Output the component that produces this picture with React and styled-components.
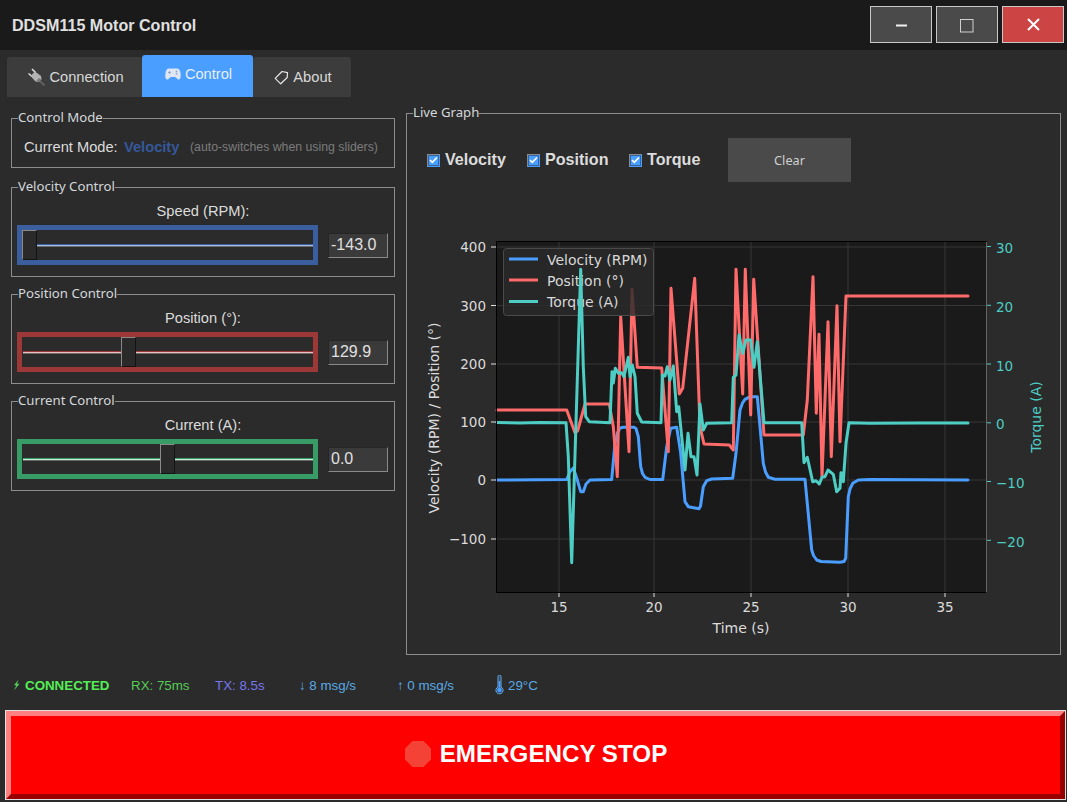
import React from 'react';
import styled, {createGlobalStyle} from 'styled-components';

const GlobalStyle = createGlobalStyle`
  html, body {
    margin: 0;
    padding: 0;
    background: #2b2b2b;
    overflow: hidden;
  }
`;

const Root = styled.div`
  width: 1067px;
  height: 802px;
  background: #2b2b2b;
  display: flex;
  flex-direction: column;
  font-family: "Liberation Sans", Arial, sans-serif;
  color: #e0e0e0;
`;

const TitleBar = styled.div`
  height: 50px;
  flex: none;
  background: #1a1a1a;
  display: flex;
  align-items: flex-start;
  padding: 6px 3px 0 12px;
  box-sizing: border-box;
`;

const Title = styled.div`
  flex: 1;
  font-size: 16.1px;
  font-weight: bold;
  line-height: 38px;
  color: #e0e0e0;
`;

const WinButtons = styled.div`
  display: flex;
  gap: 4px;
`;

const WinButton = styled.div`
  width: 62px;
  height: 37px;
  box-sizing: border-box;
  border: 1px solid #c8c8c8;
  padding-top: ${p => p.$nudge || 0}px;
  background: ${p => (p.$close ? '#cc4444' : '#4a4a4a')};
  display: flex;
  align-items: center;
  justify-content: center;
`;

const TabBar = styled.div`
  height: 47px;
  flex: none;
  display: flex;
  align-items: flex-end;
  padding-left: 7px;
  box-sizing: border-box;
`;

const Tab = styled.div`
  width: ${p => p.$width}px;
  height: ${p => (p.$active ? 42 : 40)}px;
  box-sizing: border-box;
  padding: 0 0 ${p => (p.$active ? 4 : 0)}px 2px;
  background: ${p => (p.$active ? '#4a9eff' : '#3c3c3c')};
  border-radius: 3px 3px 0 0;
  display: flex;
  align-items: center;
  justify-content: center;
  gap: 4px;
  font-size: 14.67px;
  color: ${p => (p.$active ? '#e6eefa' : '#d8d8d8')};
`;

const Main = styled.div`
  flex: 1;
  display: flex;
  padding: 8px 6px 0 11px;
  gap: 11px;
  min-height: 0;
`;

const LeftColumn = styled.div`
  width: 384px;
  flex: none;
  padding-top: 5px;
  display: flex;
  flex-direction: column;
  gap: 9px;
`;

const Group = styled.fieldset`
  margin: 0 0 ${p => p.$after || 0}px;
  min-width: 0;
  box-sizing: border-box;
  border: 1px solid #8c8c8c;
  padding: 0;
  height: ${p => p.$height}px;
`;

const GroupTitle = styled.legend`
  margin-left: 6px;
  padding: 0;
  height: 16px;
  font-family: "Noto Sans", sans-serif;
  font-size: 13.2px;
  line-height: 14px;
  color: #d4d8dc;
  background: #2b2b2b;
`;

const ModeRow = styled.div`
  display: flex;
  align-items: center;
  height: 18px;
  margin-top: 12px;
  padding-left: 12px;
  white-space: nowrap;
`;

const ModeLabel = styled.span`
  font-size: 14.67px;
  color: #dcdcdc;
  width: 100px;
  flex: none;
`;

const ModeValue = styled.span`
  font-size: 14.67px;
  font-weight: bold;
  color: #35589a;
  width: 66px;
  flex: none;
`;

const ModeHint = styled.span`
  font-size: 12.3px;
  color: #7c7c7c;
`;

const SliderBody = styled.div`
  padding: 0 5px;
`;

const SliderLabel = styled.div`
  text-align: center;
  font-size: 14.67px;
  line-height: 16px;
  color: #dcdcdc;
  margin: 8px 0 6px;
`;

const SliderRow = styled.div`
  display: flex;
  align-items: center;
  gap: 10px;
`;

const SliderFrame = styled.div`
  width: 301px;
  height: 40px;
  box-sizing: border-box;
  border: 5px solid ${p => p.$color};
  position: relative;
`;

const SliderTrack = styled.div`
  position: absolute;
  left: 1px;
  right: 0;
  top: 14px;
  height: 3px;
  background: linear-gradient(${p => p.$color} 34%, ${p => p.$light} 34%, ${p => p.$light} 67%, #6a6a6a 67%);
`;

const SliderHandle = styled.div`
  position: absolute;
  top: 0;
  width: 15px;
  height: 30px;
  box-sizing: border-box;
  background: #2a2a2a;
  border: 1px solid;
  border-color: #8a8a8a #141414 #141414 #8a8a8a;
`;

const ValueBox = styled.input`
  width: 60px;
  height: 25px;
  box-sizing: border-box;
  margin: 0;
  padding: 0 2px;
  background: #3a3a3a;
  border: 1px solid;
  border-color: #262626 #8a8a8a #8a8a8a #262626;
  outline: none;
  font-family: "Liberation Sans", sans-serif;
  font-size: 16px;
  color: #e0e0e0;
`;

const RightColumn = styled.div`
  flex: 1;
  min-width: 0;
`;

const GraphControls = styled.div`
  display: flex;
  align-items: center;
  height: 44px;
  margin-top: 17px;
  padding-left: 20px;
`;

const CheckItem = styled.div`
  width: ${p => p.$width}px;
  flex: none;
  display: flex;
  align-items: center;
  gap: 5px;
  height: 18px;
  line-height: 16px;
  font-size: 16.1px;
  font-weight: bold;
  color: #dcdcdc;
`;

const CheckBox = styled.span`
  width: 13px;
  height: 13px;
  box-sizing: border-box;
  border: 1px solid;
  border-color: #8a8a8a #4a9eff #4a9eff #8a8a8a;
  background: #4a9eff;
  box-shadow: inset 0 0 0 1px #35659c;
  display: flex;
  align-items: center;
  justify-content: center;
`;

const CheckText = styled.span`
  padding-bottom: 2px;
`;

const ClearButton = styled.div`
  width: 123px;
  height: 44px;
  margin-left: 26px;
  background: #4a4a4a;
  display: flex;
  align-items: center;
  justify-content: center;
  font-family: "Noto Sans", sans-serif;
  font-size: 12.7px;
  color: #d0d0d0;
`;

const ChartSvg = styled.svg`
  display: block;
  margin: 43px 0 0 13px;
  font-family: "DejaVu Sans", sans-serif;
  font-size: 14px;
`;

const TickLabel = styled.text`
  font-size: 13.5px;
`;

const StatusBar = styled.div`
  height: 54px;
  flex: none;
  box-sizing: border-box;
  padding: 8px 0 4px 12px;
  display: flex;
  align-items: center;
  font-size: 13.33px;
  white-space: nowrap;
`;

const StatusItem = styled.span`
  width: ${p => p.$width}px;
  flex: none;
  display: flex;
  align-items: center;
  gap: ${p => p.$gap || 0}px;
  color: ${p => p.$color};
  font-weight: ${p => (p.$bold ? 'bold' : 'normal')};
`;

const StopButton = styled.div`
  height: 90px;
  flex: none;
  margin: 0 1px 2px 5px;
  padding-bottom: 2px;
  box-sizing: border-box;
  border-style: solid;
  border-width: 6px;
  border-color: #ff8080 #990000 #990000 #ff8080;
  outline: 1px solid #e0e0e0;
  outline-offset: -1px;
  background: #ff0000;
  display: flex;
  align-items: center;
  justify-content: center;
  gap: 8px;
  font-size: 24.2px;
  font-weight: bold;
  color: #ffffff;
`;

const PlugIcon = () => (
  <svg width="18" height="18" viewBox="0 0 18 18">
    <path d="M1.500 5.500l3.500 3M5 1l3.500 3.500" stroke="#e0e0e0" strokeWidth="1.500" fill="none" />
    <path d="M3.500 8L8 3.500l6 4.500.5 3.500-2.500 2.500-3.500-.5z" fill="#b4b4b4" />
    <path d="M9 13l3-3 2.500 1.500-2.500 2.500z" fill="#7c7c7c" />
    <path d="M13 13L17.500 17.500" stroke="#5e5e5e" strokeWidth="2.200" fill="none" />
  </svg>
);

const PadIcon = () => (
  <svg width="16" height="12" viewBox="0 0 16 12">
    <path
      d="M4 .5h8c2 0 3 1.500 3.500 4.500.4 3 .3 6-1.500 6.500-1.600.3-2.800-2.500-4-2.500H6c-1.200 0-2.400 2.800-4 2.500C.2 11 .1 8 .5 5 1 2 2 .5 4 .5z"
      fill="#dde6f2"
    />
    <path d="M3 4.500h3M4.500 3v3" stroke="#8fa9c8" strokeWidth="1" />
    <circle cx="11.500" cy="3.500" r=".9" fill="#8fa9c8" />
    <circle cx="11.500" cy="5.800" r=".9" fill="#8fa9c8" />
  </svg>
);

const TagIcon = () => (
  <svg width="15" height="15" viewBox="0 0 15 15">
    <path
      d="M8 1.500l5.500 1.200-.3 4.800-6.500 6.300-5.500-5.500z"
      fill="none"
      stroke="#e6e6e6"
      strokeWidth="1.200"
      strokeLinejoin="round"
    />
  </svg>
);

const BoltIcon = () => (
  <svg width="9" height="12" viewBox="0 0 9 12">
    <path d="M6.500.5L2 6.200h2.300L2 11.500l5.500-6.700H5z" fill="#55cc55" />
  </svg>
);

const ThermoIcon = () => (
  <svg width="9" height="20" viewBox="0 0 9 20">
    <path
      d="M3 1.500a1.500 1.500 0 013 0v10.500a3.600 3.600 0 11-3 0z"
      fill="#2c4a66"
      stroke="#6aa9de"
      strokeWidth="1"
    />
    <rect x="3.700" y="6" width="1.600" height="8" fill="#4a9eff" />
    <circle cx="4.500" cy="15" r="2.300" fill="#4a9eff" />
  </svg>
);

const StopIcon = () => (
  <svg width="28" height="28" viewBox="0 0 28 28">
    <polygon points="8.500,1 19.500,1 27,8.500 27,19.500 19.500,27 8.500,27 1,19.500 1,8.500" fill="#f44336" />
  </svg>
);

const sliders = [
  {id: 'vel', title: 'Velocity Control', label: 'Speed (RPM):', value: '-143.0', color: '#3b5f9e', light: '#a9c0e6', handle: 4},
  {id: 'pos', title: 'Position Control', label: 'Position (°):', value: '129.9', color: '#9c3838', light: '#eec0c0', handle: 103},
  {id: 'cur', title: 'Current Control', label: 'Current (A):', value: '0.0', color: '#389c66', light: '#c0eed6', handle: 142},
];

const velocityLine = [
  [497, 480], [566.7, 479.5], [570, 471.7], [573.3, 468], [576.7, 478], [580.7, 491.7], [583.3, 491.7], [586, 484],
  [590, 480], [611.7, 479.5], [615, 443.3], [617.5, 433], [620, 428], [623.3, 427.3], [634, 427.3], [636, 428.5], [638.3, 436.7], [640.7, 466.7],
  [642.5, 473.5], [645, 477.3], [650, 479.5], [662.7, 479.5], [666.7, 446.7], [670.7, 428.3], [676.7, 427.3], [680.7, 453], [685, 501.7],
  [688.3, 506.7], [699, 508.7], [700.5, 506], [703.3, 486.7], [706.7, 480.7], [711.7, 479], [732.7, 478.3], [736, 453.3], [740, 410],
  [742.5, 403], [745, 399.3], [750, 396.7], [757.3, 396.7], [763.3, 463.3], [765.5, 472], [768.3, 477.3], [775, 479.3], [805, 479.3], [811.7, 550],
  [813.5, 555.5], [816.7, 560], [821, 561.5], [840, 562.3], [844, 561.5], [845.7, 558.3], [848.3, 496.7], [850, 489], [852.7, 483.3], [858.3, 480], [870, 479.5], [968, 480],
];

const positionLine = [
  [497, 410], [566.7, 410], [575, 432.7], [577.7, 430.7], [585, 404], [609.3, 404], [613.3, 426.7], [617.3, 476.7],
  [620.7, 316.7], [629, 451.7], [632, 289.3], [637.3, 367.3], [661.7, 368], [668.3, 451.7], [671, 288.3], [679.3, 394],
  [682.7, 388.3], [694.7, 278.3], [700, 426.7], [704, 444], [729.3, 445], [733.3, 450], [736, 269.3], [742.7, 394],
  [745.3, 269.3], [750.7, 415], [753.7, 279.3], [764, 435], [803.3, 435], [807.3, 400], [813, 276.7], [816.3, 413.3],
  [819, 334.3], [822, 476.7], [828, 321.7], [831.3, 456.7], [837, 305.7], [840, 441.7], [846, 296], [968, 296],
];

const torqueLine = [
  [497, 422.5], [520, 423], [540, 422.5], [566, 422.7], [568.3, 456.7], [571.7, 562.7], [580.7, 269.3], [583.3, 366.7],
  [585.7, 416.7], [589.3, 421.7], [610, 422.7], [612, 371.7], [613.3, 383], [615.3, 368.3], [618.3, 373.3], [621.7, 372.7],
  [624, 376.7], [628.3, 357.3], [630, 376.7], [632.3, 365], [635, 376.7], [637.3, 413.3], [641.7, 422], [661, 422.7],
  [662.3, 375], [665, 376], [667.3, 366.7], [670, 380], [673.3, 366], [676.7, 411.7], [678.7, 406.7], [685, 470],
  [688, 433.3], [691, 456.7], [694, 456.7], [697, 475], [700, 404], [703.3, 430], [706.7, 423.3], [731.7, 422.7],
  [733.3, 377.3], [736, 375], [739, 335], [742.7, 353.3], [746, 340], [750.7, 340], [754, 367.3], [757.3, 341.7],
  [764, 422.7], [801.7, 422.7], [804, 462.7], [807.3, 457.3], [812.7, 481.7], [816, 480.7], [819.3, 484], [822, 477.3],
  [825, 476.7], [828, 470], [833.3, 474.3], [836.7, 491.7], [840, 488.3], [841, 472.7], [843.3, 481.7], [846, 443.3],
  [849, 422.7], [870, 423.3], [920, 423], [968, 423],
];

const xTicks = [[15, 559], [20, 654], [25, 751], [30, 848], [35, 945]];
const leftTicks = [['400', 247], ['300', 305.5], ['200', 364], ['100', 422], ['0', 480], ['−100', 539]];
const rightTicks = [['30', 246.5], ['20', 305.3], ['10', 364], ['0', 422.8], ['−10', 481.5], ['−20', 540.3]];
const legendRows = [
  ['Velocity (RPM)', '#4a9eff', 259, 264.5],
  ['Position (°)', '#ff6b6b', 280, 286],
  ['Torque (A)', '#4ecdc4', 301.5, 307],
];

const toPoints = line => line.map(([x, y]) => `${x},${y}`).join(' ');

const Curve = ({line, color}) => (
  <polyline points={toPoints(line)} fill="none" stroke={color} strokeWidth="3" strokeLinejoin="round" strokeLinecap="round" />
);

const Chart = () => (
  <ChartSvg width="630" height="420" viewBox="420 225 630 420">
    <rect x="496" y="241" width="490" height="351" fill="#1a1a1a" />
    {xTicks.map(([, x]) => (
      <line key={x} x1={x} x2={x} y1="241" y2="592" stroke="#363636" />
    ))}
    {leftTicks.map(([, y]) => (
      <line key={y} x1="496" x2="986" y1={y} y2={y} stroke="#363636" />
    ))}
    <Curve line={velocityLine} color="#4a9eff" />
    <Curve line={positionLine} color="#ff6b6b" />
    <rect x="503.500" y="248.500" width="150" height="67" rx="3" fill="#2b2b2b" fillOpacity="0.82" stroke="#4a4a4a" />
    {legendRows.map(([name, color, y, baseline]) => (
      <React.Fragment key={name}>
        <line x1="509" x2="538" y1={y} y2={y} stroke={color} strokeWidth="3" />
        <text x="547" y={baseline} fill="#d8d8d8">{name}</text>
      </React.Fragment>
    ))}
    <Curve line={torqueLine} color="#4ecdc4" />
    <path d="M986.500 241V592" fill="none" stroke="#666" />
    <path d="M496.500 241V592.500H986" fill="none" stroke="#000" />
    <path d="M496 241.500H987" fill="none" stroke="#000" />
    {xTicks.map(([label, x]) => (
      <React.Fragment key={label}>
        <line x1={x} x2={x} y1="593" y2="597" stroke="#e0e0e0" />
        <TickLabel x={x} y="612" textAnchor="middle" fill="#dcdcdc">{label}</TickLabel>
      </React.Fragment>
    ))}
    {leftTicks.map(([label, y]) => (
      <React.Fragment key={label}>
        <line x1="491" x2="496" y1={y} y2={y} stroke="#e0e0e0" />
        <TickLabel x="486" y={y + 5} textAnchor="end" fill="#dcdcdc">{label}</TickLabel>
      </React.Fragment>
    ))}
    {rightTicks.map(([label, y]) => (
      <React.Fragment key={label}>
        <line x1="987" x2="991" y1={y} y2={y} stroke="#4ecdc4" />
        <TickLabel x="996" y={y + 6.500} fill="#4ecdc4">{label}</TickLabel>
      </React.Fragment>
    ))}
    <text x="741" y="633" textAnchor="middle" fill="#dcdcdc">Time (s)</text>
    <text transform="translate(439 418) rotate(-90)" textAnchor="middle" fill="#dcdcdc">Velocity (RPM) / Position (°)</text>
    <text transform="translate(1041 417) rotate(-90)" textAnchor="middle" fill="#4ecdc4">Torque (A)</text>
  </ChartSvg>
);

const App = () => (
  <Root>
    <GlobalStyle />
    <TitleBar>
      <Title>DDSM115 Motor Control</Title>
      <WinButtons>
        <WinButton $nudge={2}>
          <svg width="12" height="3" viewBox="0 0 12 3"><rect x="1" y="0.500" width="11" height="2" fill="#f0f0f0" /></svg>
        </WinButton>
        <WinButton $nudge={3}>
          <svg width="14" height="14" viewBox="0 0 14 14"><rect x=".5" y=".5" width="12.500" height="12.500" fill="none" stroke="#d0d0d0" /></svg>
        </WinButton>
        <WinButton $close>
          <svg width="13" height="13" viewBox="0 0 13 13"><path d="M1 1l11 11M12 1L1 12" stroke="#fff" strokeWidth="2" /></svg>
        </WinButton>
      </WinButtons>
    </TitleBar>
    <TabBar>
      <Tab $width={135}><PlugIcon />Connection</Tab>
      <Tab $width={111} $active><PadIcon />Control</Tab>
      <Tab $width={98}><TagIcon />About</Tab>
    </TabBar>
    <Main>
      <LeftColumn>
        <Group $height={58} $after={2}>
          <GroupTitle>Control Mode</GroupTitle>
          <ModeRow>
            <ModeLabel>Current Mode:</ModeLabel>
            <ModeValue>Velocity</ModeValue>
            <ModeHint>(auto-switches when using sliders)</ModeHint>
          </ModeRow>
        </Group>
        {sliders.map(({id, title, label, value, color, light, handle}) => (
          <Group key={id} $height={98}>
            <GroupTitle>{title}</GroupTitle>
            <SliderBody>
              <SliderLabel>{label}</SliderLabel>
              <SliderRow>
                <SliderFrame $color={color}>
                  <SliderTrack $color={color} $light={light} />
                  <SliderHandle style={{left: handle - 4}} />
                </SliderFrame>
                <ValueBox readOnly value={value} />
              </SliderRow>
            </SliderBody>
          </Group>
        ))}
      </LeftColumn>
      <RightColumn>
        <Group $height={550}>
          <GroupTitle>Live Graph</GroupTitle>
          <GraphControls>
            {[['Velocity', 100], ['Position', 102], ['Torque', 73]].map(([name, width]) => (
              <CheckItem key={name} $width={width}>
                <CheckBox>
                  <svg width="9" height="8" viewBox="0 0 9 8"><path d="M1 4l2.300 2.300L8 1.500" fill="none" stroke="#fff" strokeWidth="1.700" /></svg>
                </CheckBox>
                <CheckText>{name}</CheckText>
              </CheckItem>
            ))}
            <ClearButton>Clear</ClearButton>
          </GraphControls>
          <Chart />
        </Group>
      </RightColumn>
    </Main>
    <StatusBar>
      <StatusItem $width={119} $color="#55ee55" $bold $gap={4}><BoltIcon />CONNECTED</StatusItem>
      <StatusItem $width={84} $color="#55cc55">RX: 75ms</StatusItem>
      <StatusItem $width={84} $color="#7777ee">TX: 8.5s</StatusItem>
      <StatusItem $width={98} $color="#5aa9e6">↓ 8 msg/s</StatusItem>
      <StatusItem $width={98} $color="#5aa9e6">↑ 0 msg/s</StatusItem>
      <StatusItem $width={60} $color="#5aa9e6" $gap={4}><ThermoIcon />29°C</StatusItem>
    </StatusBar>
    <StopButton><StopIcon />EMERGENCY STOP</StopButton>
  </Root>
);

export default App;
